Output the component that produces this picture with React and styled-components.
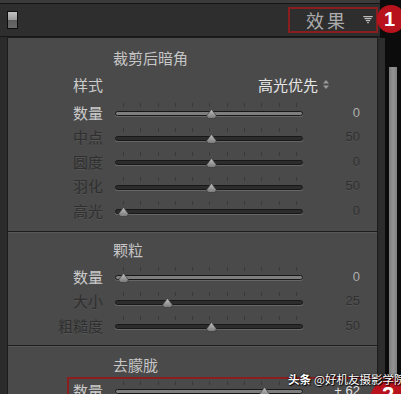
import React from 'react';
import styled, { createGlobalStyle } from 'styled-components';

const GlobalStyle = createGlobalStyle`
  html, body { margin: 0; padding: 0; background: #1e1e1e; }
  body { font-family: "Noto Sans CJK SC", "Noto Sans", sans-serif; }
`;

const Frame = styled.div`
  position: relative;
  width: 401px;
  height: 394px;
  overflow: hidden;
  display: grid;
  grid-template-columns: 380px 21px;
  background: #0c0c0c;
`;

const Main = styled.div`
  display: flex;
  flex-direction: column;
  background: #2b2b2b;
  min-height: 0;
`;

const TopStrip = styled.div`
  height: 3px;
  background: #3b3b3b;
  border-bottom: 1px solid #141414;
`;

const Header = styled.div`
  box-sizing: border-box;
  height: 33px;
  display: flex;
  align-items: center;
  justify-content: space-between;
  padding: 0 7px;
  background: #2e2e2e;
  border-bottom: 1px solid #171717;
`;

const PanelToggle = styled.div`
  box-sizing: border-box;
  width: 11px;
  height: 18px;
  border: 1px solid #0e0e0e;
  background: linear-gradient(#c2c2c2, #9a9a9a 48%, #5c5c5c 52%, #6a6a6a);
`;

const HeaderRight = styled.div`
  display: flex;
  align-items: center;
  gap: 15px;
`;

const HeaderTitle = styled.span`
  font-size: 18px;
  letter-spacing: 3px;
  color: #ababab;
  line-height: 1;
`;

const Body = styled.div`
  flex: 1;
  display: flex;
  padding-left: 7px;
  min-height: 0;
`;

const Panel = styled.div`
  width: 369px;
  display: flex;
  flex-direction: column;
  background: #4a4a4a;
  border: 1px solid #1c1c1c;
  border-bottom: none;
`;

const Section = styled.section`
  padding: ${p => p.$pt}px 0 ${p => p.$pb}px;
  border-bottom: 1px solid #1d1d1d;
  & + & { border-top: 1px solid #585858; }
  &:last-child { border-bottom: none; }
`;

const SectionTitle = styled.div`
  height: 20px;
  line-height: 20px;
  padding-left: 105px;
  margin-bottom: ${p => p.$mb}px;
  font-size: 15px;
  color: #c6c6c6;
`;

const Row = styled.div`
  display: flex;
  align-items: center;
  height: ${p => p.$h || 24.5}px;
`;

const Label = styled.div`
  width: 95px;
  text-align: right;
  font-size: 15px;
  line-height: 1;
  color: ${p => (p.$active ? '#cbcbcb' : '#2f2f2f')};
  text-shadow: ${p => (p.$active ? 'none' : '0 1px 0 rgba(255,255,255,0.07)')};
`;

const StyleValue = styled.div`
  margin-left: 12px;
  width: 214px;
  display: flex;
  justify-content: flex-end;
  align-items: center;
  gap: 5px;
  font-size: 15px;
  color: #e6e6e6;
`;

const Slider = styled.div`
  position: relative;
  margin-left: 12px;
  width: 188px;
  height: 100%;
`;

const Ticks = styled.div`
  position: absolute;
  left: 8px;
  right: 6px;
  top: calc(50% - 9px);
  height: 4px;
  display: flex;
  justify-content: space-between;
  & > i { width: 1px; background: #3a3a3a; }
`;

const Track = styled.div`
  position: absolute;
  left: 0;
  right: 0;
  top: calc(50% - 1px);
  box-sizing: border-box;
  height: 5px;
  border-radius: 3px;
  border: 1px solid #181818;
  background: ${p => (p.$active ? '#7e7e7e' : '#2c2c2c')};
  box-shadow: 0 1px 0 #666;
`;

const Thumb = styled.svg`
  position: absolute;
  top: calc(50% - 3px);
`;

const Value = styled.div`
  width: 57px;
  text-align: right;
  font-family: "Liberation Sans", Arial, sans-serif;
  font-size: 13px;
  color: ${p => (p.$bright ? '#e4e4e4' : p.$active ? '#adadad' : '#303030')};
  text-shadow: ${p => (p.$active ? 'none' : '0 1px 0 rgba(255,255,255,0.07)')};
`;

const Gutter = styled.div`
  display: flex;
  padding-top: 38px;
`;

const Band = styled.div`
  width: 5px;
  background: #2d2d2d;
`;

const ScrollTrack = styled.div`
  margin-left: 4px;
  width: 8px;
  padding-top: 29px;
`;

const ScrollThumb = styled.div`
  height: 400px;
  background: linear-gradient(90deg, #7c7c7c, #939393 50%, #808080);
`;

const Mark = styled.div`
  position: absolute;
  box-sizing: border-box;
  left: ${p => p.$x}px;
  top: ${p => p.$y}px;
  width: ${p => p.$w}px;
  height: ${p => p.$h}px;
  border: 2px solid #8a1d1d;
  pointer-events: none;
`;

const Badge = styled.div`
  position: absolute;
  left: ${p => p.$x}px;
  top: ${p => p.$y}px;
  width: ${p => p.$size}px;
  height: ${p => p.$size}px;
  border-radius: 50%;
  background: #b8131c;
  color: #fff;
  font-family: "Liberation Sans", Arial, sans-serif;
  font-weight: bold;
  font-size: ${p => p.$fs}px;
  line-height: 1;
  box-sizing: border-box;
  padding: ${p => p.$pad};
`;

const Watermark = styled.div`
  position: absolute;
  left: 288px;
  top: 371px;
  font-size: 11.5px;
  line-height: 16px;
  color: #fff;
  white-space: nowrap;
  text-shadow: 0 0 2px #000, 1px 1px 1px #000;
  & b { font-weight: bold; margin-right: 3px; }
`;

const pos = v => 8 + v * 176;

function Range({ value, active }) {
  return (
    <Slider>
      <Ticks>
        {Array.from({ length: 11 }).map((_, i) => <i key={i} />)}
      </Ticks>
      <Track $active={active} />
      <Thumb width="11" height="10" viewBox="0 0 11 10" style={{ left: pos(value) - 5.5 }}>
        <defs>
          <linearGradient id="tg" x1="0" y1="0" x2="0" y2="1">
            <stop offset="0" stopColor="#c4c4c4" />
            <stop offset="1" stopColor="#767676" />
          </linearGradient>
        </defs>
        <path d="M5.5 0.3 L10.2 6.6 Q10.6 9.6 7.4 9.6 L3.6 9.6 Q0.4 9.6 0.8 6.6 Z" fill="url(#tg)" stroke="#2e2e2e" strokeWidth="0.6" />
      </Thumb>
    </Slider>
  );
}

function SliderRow({ label, value, pos: p, active, bright }) {
  return (
    <Row>
      <Label $active={active}>{label}</Label>
      <Range value={p} active={active} />
      <Value $active={active} $bright={bright}>{value}</Value>
    </Row>
  );
}

const vignette = [
  { label: '数量', value: '0', pos: 0.5, active: true },
  { label: '中点', value: '50', pos: 0.5 },
  { label: '圆度', value: '0', pos: 0.5 },
  { label: '羽化', value: '50', pos: 0.5 },
  { label: '高光', value: '0', pos: 0 },
];

const grain = [
  { label: '数量', value: '0', pos: 0, active: true },
  { label: '大小', value: '25', pos: 0.25 },
  { label: '粗糙度', value: '50', pos: 0.5 },
];

export default function App() {
  return (
    <>
      <GlobalStyle />
      <Frame>
        <Main>
          <TopStrip />
          <Header>
            <PanelToggle />
            <HeaderRight>
              <HeaderTitle>效果</HeaderTitle>
              <svg width="10" height="8" viewBox="0 0 10 8">
                <path d="M0.3 0.7 H9.7 M1.6 2.7 H8.4 M2.9 4.7 H7.1 M4.2 6.7 H5.8" stroke="#bdbdbd" strokeWidth="1.2" />
              </svg>
            </HeaderRight>
          </Header>
          <Body>
            <Panel>
              <Section $pt={10} $pb={8.5}>
                <SectionTitle $mb={5}>裁剪后暗角</SectionTitle>
                <Row $h={22}>
                  <Label $active>样式</Label>
                  <StyleValue>
                    高光优先
                    <svg width="6" height="9" viewBox="0 0 6 9">
                      <path d="M3 0 L6 3.5 H0 Z M0 5.5 H6 L3 9 Z" fill="#9a9a9a" />
                    </svg>
                  </StyleValue>
                </Row>
                <div style={{ height: 5 }} />
                {vignette.map(r => <SliderRow key={r.label} {...r} />)}
              </Section>
              <Section $pt={7} $pb={7.5}>
                <SectionTitle $mb={4}>颗粒</SectionTitle>
                {grain.map(r => <SliderRow key={r.label} {...r} />)}
              </Section>
              <Section $pt={8} $pb={0}>
                <SectionTitle $mb={3}>去朦胧</SectionTitle>
                <SliderRow label="数量" value="+ 62" pos={0.805} active bright />
              </Section>
            </Panel>
          </Body>
        </Main>
        <Gutter>
          <Band />
          <ScrollTrack>
            <ScrollThumb />
          </ScrollTrack>
        </Gutter>

        <Mark $x={288} $y={7} $w={90} $h={26} />
        <Badge $x={377} $y={5} $size={28} $fs={20} $pad="4px 0 0 7px">1</Badge>
        <Mark $x={67} $y={377} $w={360} $h={40} />
        <Badge $x={369} $y={379} $size={46} $fs={22} $pad="5px 0 0 13px">2</Badge>
        <Watermark><b>头条</b>@好机友摄影学院</Watermark>
      </Frame>
    </>
  );
}
